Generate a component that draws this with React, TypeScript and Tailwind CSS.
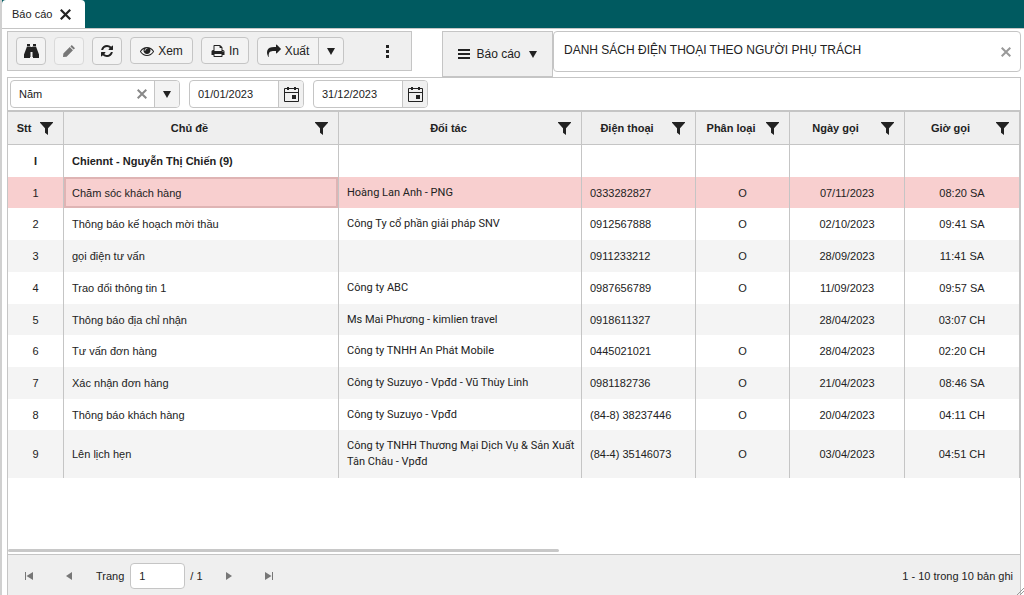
import type { ReactNode } from 'react';

type Row = { stt: string; subject: string; partner: string; phone: string; kind: string; date: string; time: string; height: string };

const rows: Row[] = [
  { stt: '1', subject: 'Chăm sóc khách hàng', partner: 'Hoàng Lan Anh - PNG', phone: '0333282827', kind: 'O', date: '07/11/2023', time: '08:20 SA', height: 'h-[31px]' },
  { stt: '2', subject: 'Thông báo kế hoạch mời thầu', partner: 'Công Ty cổ phần giải pháp SNV', phone: '0912567888', kind: 'O', date: '02/10/2023', time: '09:41 SA', height: 'h-8' },
  { stt: '3', subject: 'gọi điện tư vấn', partner: '', phone: '0911233212', kind: 'O', date: '28/09/2023', time: '11:41 SA', height: 'h-8' },
  { stt: '4', subject: 'Trao đổi thông tin 1', partner: 'Công ty ABC', phone: '0987656789', kind: 'O', date: '11/09/2023', time: '09:57 SA', height: 'h-8' },
  { stt: '5', subject: 'Thông báo địa chỉ nhận', partner: 'Ms Mai Phương - kimlien travel', phone: '0918611327', kind: '', date: '28/04/2023', time: '03:07 CH', height: 'h-[31px]' },
  { stt: '6', subject: 'Tư vấn đơn hàng', partner: 'Công ty TNHH An Phát Mobile', phone: '0445021021', kind: 'O', date: '28/04/2023', time: '02:20 CH', height: 'h-8' },
  { stt: '7', subject: 'Xác nhận đơn hàng', partner: 'Công ty Suzuyo - Vpđd - Vũ Thùy Linh', phone: '0981182736', kind: 'O', date: '21/04/2023', time: '08:46 SA', height: 'h-8' },
  { stt: '8', subject: 'Thông báo khách hàng', partner: 'Công ty Suzuyo - Vpđd', phone: '(84-8) 38237446', kind: 'O', date: '20/04/2023', time: '04:11 CH', height: 'h-[31px]' },
  { stt: '9', subject: 'Lên lịch hẹn', partner: 'Công ty TNHH Thương Mại Dịch Vụ & Sản Xuất Tân Châu - Vpđd', phone: '(84-4) 35146073', kind: 'O', date: '03/04/2023', time: '04:51 CH', height: 'h-12' },
];

const columns = [
  { title: 'Stt', width: 'w-14' },
  { title: 'Chủ đề', width: 'w-[275px]' },
  { title: 'Đối tác', width: '' },
  { title: 'Điện thoại', width: 'w-[114px]' },
  { title: 'Phân loại', width: 'w-[94px]' },
  { title: 'Ngày gọi', width: 'w-[115px]' },
  { title: 'Giờ gọi', width: 'w-[115px]' },
];

const buttonLook = 'flex items-center justify-center rounded border border-[#c5c5c5] bg-[#f3f3f3] text-[#222]';

function IconButton({ label, disabled, children }: { label: string; disabled?: boolean; children: ReactNode }) {
  return (
    <button type="button" aria-label={label} disabled={disabled} className={`${buttonLook} h-7 w-[30px] disabled:border-[#dadada] disabled:text-[#777]`}>
      {children}
    </button>
  );
}

function Glyph({ box, size, d }: { box: string; size: string; d: string }) {
  return (
    <svg viewBox={box} className={size} fill="currentColor" aria-hidden="true">
      <path d={d} />
    </svg>
  );
}

const refreshPath =
  'M1511 928q0 5-1 7-64 268-268 434.500t-478 166.500q-146 0-282.500-55t-243.500-157l-129 129q-19 19-45 19t-45-19-19-45v-448q0-26 19-45t45-19h448q26 0 45 19t19 45-19 45l-137 137q71 66 161 102t187 36q134 0 250-65t186-179q11-17 53-117 8-23 30-23h192q13 0 22.500 9.500t9.500 22.500zm25-800v448q0 26-19 45t-45 19h-448q-26 0-45-19t-19-45 19-45l138-138q-148-137-349-137-134 0-250 65t-186 179q-11 17-53 117-8 23-30 23h-199q-13 0-22.500-9.500t-9.500-22.500v-7q65-268 270-434.500t480-166.500q146 0 284 55.500t245 156.500l130-129q19-19 45-19t45 19 19 45z';
const eyePath =
  'M1664 960q-152-236-381-353 61 104 61 225 0 185-131.500 316.500t-316.500 131.500-316.500-131.500-131.500-316.500q0-121 61-225-229 117-381 353 133 205 333.500 326.500t434.500 121.500 434.500-121.500 333.500-326.500zm-720-384q0-20-14-34t-34-14q-125 0-214.500 89.500t-89.500 214.500q0 20 14 34t34 14 34-14 14-34q0-86 61-147t147-61q20 0 34-14t14-34zm848 384q0 34-20 69-140 230-376.500 368.500t-499.500 138.500-499.500-139-376.500-368q-20-35-20-69t20-69q140-229 376.500-368t499.500-139 499.500 139 376.500 368q20 35 20 69z';
const printPath =
  'M448 1536h896v-256h-896v256zm0-640h896v-384h-160q-40 0-68-28t-28-68v-160h-640v640zm1152 64q0-26-19-45t-45-19-45 19-19 45 19 45 45 19 45-19 19-45zm128 0v416q0 13-9.500 22.500t-22.500 9.500h-224v160q0 40-28 68t-68 28h-960q-40 0-68-28t-28-68v-160h-224q-13 0-22.500-9.500t-9.500-22.500v-416q0-79 56.500-135.500t135.500-56.500h64v-544q0-40 28-68t68-28h672q40 0 88 20t76 48l152 152q28 28 48 76t20 88v256h64q79 0 135.500 56.500t56.500 135.500z';
const sharePath =
  'M1792 640q0 26-19 45l-512 512q-19 19-45 19t-45-19-19-45v-256h-224q-98 0-175.500 6t-154 21.500-133 42.500-105.500 69.500-80 101-48.500 138.500-17.500 181q0 55 5 123 0 6 2.500 23.500t2.500 26.500q0 15-8.500 25t-23.500 10q-16 0-28-17-7-9-13-22t-13.500-30-10.500-24q-127-285-127-451 0-199 53-333 162-403 875-403h224v-256q0-26 19-45t45-19 45 19l512 512q19 19 19 45z';
const binocularsPath = 'M3 0h3v2H3zM9 0h3v2H9zM3 2.500h3.500V13H6v1H0v-3.500zM12 2.500H8.500V13H9v1h6v-3.500zM6.500 3h2v5h-2z';
const pencilPath = 'M9.500 0 13 3.500 11.500 5 8 1.500zM7.300 2.200l3.500 3.500L3.900 12.600 0 13l.4-3.900z';

function Cross({ size, weight }: { size: string; weight: number }) {
  return (
    <svg viewBox="0 0 10 10" className={size} fill="none" stroke="currentColor" strokeWidth={weight} aria-hidden="true">
      <path d="M.7.700l8.600 8.600M9.300.700L.7 9.300" />
    </svg>
  );
}

function Caret() {
  return <Glyph box="0 0 8 7" size="h-[7px] w-2" d="M0 0h8L4 7z" />;
}

function Calendar() {
  return (
    <svg viewBox="0 0 15 16" className="h-4 w-[15px]" fill="none" stroke="#222" aria-hidden="true">
      <path d="M.5 2.500h14v13H.5zM.5 6.500h14" />
      <path d="M4 1v3M11 1v3" strokeWidth="2" />
      <path d="M8 9h4v4H8z" fill="#222" stroke="none" />
    </svg>
  );
}

function DateField({ label, value }: { label: string; value: string }) {
  return (
    <div className="flex h-7 w-[115px] overflow-hidden rounded border border-[#c5c5c5]">
      <input aria-label={label} defaultValue={value} className="min-w-0 flex-1 px-2 outline-none" />
      <button type="button" aria-label={`Chọn ${label}`} className="flex w-[25px] items-center justify-center border-l border-[#c5c5c5] bg-[#f0f0f0]">
        <Calendar />
      </button>
    </div>
  );
}

function PageButton({ label, path }: { label: string; path: string }) {
  return (
    <button type="button" aria-label={label} className="flex size-7 items-center justify-center text-[#777]">
      <Glyph box="0 0 8 8" size="size-2" d={path} />
    </button>
  );
}

export default function App() {
  return (
    <div className="relative flex min-h-screen flex-col border-l-2 border-[#d0d0d0] bg-white font-['Liberation_Sans',Arial,sans-serif] text-[11px] leading-4 text-[#222]">
      <nav className="flex h-7 bg-[#005a60]">
        <div className="flex w-[83px] items-center gap-2 rounded-t bg-white pl-2.5">
          <a href="#bao-cao">Báo cáo</a>
          <button type="button" aria-label="Đóng thẻ"><Cross size="size-[11px]" weight={2} /></button>
        </div>
      </nav>
      <div className="border-t border-[#c5c5c5]" />

      <main className="mr-[3px] ml-[5px] flex flex-1 flex-col">
        <div className="flex h-12 items-start pt-0.5 text-xs">
          <div className="flex h-10 w-[405px] items-start gap-2 border border-[#c5c5c5] bg-[#efefef] pt-[5px] pl-2">
            <IconButton label="Tìm kiếm"><Glyph box="0 0 15 14" size="h-3.5 w-[15px]" d={binocularsPath} /></IconButton>
            <IconButton label="Sửa" disabled><Glyph box="0 0 13 13" size="size-3" d={pencilPath} /></IconButton>
            <IconButton label="Làm mới"><Glyph box="0 0 1536 1536" size="size-3" d={refreshPath} /></IconButton>
            <button type="button" className={`${buttonLook} h-[27px] w-[63px] gap-1`}><Glyph box="0 0 1792 1792" size="size-3.5" d={eyePath} />Xem</button>
            <button type="button" className={`${buttonLook} h-[27px] w-12 gap-1`}><Glyph box="0 0 1792 1792" size="size-3.5" d={printPath} />In</button>
            <div className={`${buttonLook} h-7 w-[87px]`}>
              <button type="button" className="flex h-full flex-1 items-center justify-center gap-1"><Glyph box="0 0 1792 1792" size="size-3.5" d={sharePath} />Xuất</button>
              <button type="button" aria-label="Tùy chọn xuất" className="flex h-full w-[25px] items-center justify-center border-l border-[#c5c5c5]"><Caret /></button>
            </div>
            <button type="button" aria-label="Thêm" className="ml-5 flex h-7 w-[30px] items-center justify-center">
              <Glyph box="0 0 3 13" size="h-[13px] w-[3px]" d="M0 0h3v3H0zM0 5h3v3H0zM0 10h3v3H0z" />
            </button>
          </div>
          <button type="button" className="ml-[30px] flex h-[46px] w-[111px] items-center justify-center gap-1.5 border border-[#c5c5c5] bg-[#f0f0f0]">
            <Glyph box="0 0 12 10" size="h-2.5 w-3" d="M0 0h12v2H0zM0 4h12v2H0zM0 8h12v2H0z" />Báo cáo<span className="ml-0.5"><Caret /></span>
          </button>
          <div className="flex h-[41px] flex-1 items-center rounded border border-[#c5c5c5] pr-[9px]">
            <input aria-label="Tên báo cáo" defaultValue="DANH SÁCH ĐIỆN THOẠI THEO NGƯỜI PHỤ TRÁCH" className="min-w-0 flex-1 px-2.5 pb-1 outline-none" />
            <button type="button" aria-label="Xóa báo cáo" className="text-[#999]"><Cross size="size-2.5" weight={2} /></button>
          </div>
        </div>

        <div className="flex h-[35px] items-start border border-b-2 border-[#c5c5c5] pt-0.5 pl-0.5">
          <div className="flex h-7 w-[170px] items-center overflow-hidden rounded border border-[#c5c5c5]">
            <input aria-label="Kỳ báo cáo" defaultValue="Năm" className="min-w-0 flex-1 px-2 outline-none" />
            <button type="button" aria-label="Xóa kỳ" className="mr-[7px] text-[#888]"><Cross size="size-2.5" weight={2} /></button>
            <button type="button" aria-label="Chọn kỳ" className="flex h-full w-[25px] items-center justify-center border-l border-[#c5c5c5] bg-[#f3f3f3]"><Caret /></button>
          </div>
          <div className="ml-[9px] flex gap-[9px]">
            <DateField label="từ ngày" value="01/01/2023" />
            <DateField label="đến ngày" value="31/12/2023" />
          </div>
        </div>

        <div className="flex-1 border-x border-[#c5c5c5]">
          <table className="w-full table-fixed border-separate border-spacing-0">
            <colgroup>
              {columns.map((c) => <col key={c.title} className={c.width} />)}
            </colgroup>
            <thead>
              <tr className="h-[33px] bg-[#efefef]">
                {columns.map((c) => (
                  <th key={c.title} className="border-r border-b border-[#c5c5c5] p-0">
                    <div className="flex items-center pr-2.5">
                      <span className="flex-1 text-center">{c.title}</span>
                      <button type="button" aria-label={`Lọc ${c.title}`}>
                        <Glyph box="0 0 13 13" size="size-[13px]" d="M0 0h13v.7L8 6.300V13l-3-2.300V6.300L0 .7z" />
                      </button>
                    </div>
                  </th>
                ))}
              </tr>
            </thead>
            <tbody className="[&_td]:border-r [&_td]:border-[#c5c5c5] [&_td]:px-2 [&_td]:py-0">
              <tr className="h-8 font-bold">
                <td className="text-center">I</td>
                <td>Chiennt - Nguyễn Thị Chiến (9)</td>
                <td /><td /><td /><td /><td />
              </tr>
              {rows.map((r, i) => (
                <tr key={r.stt} className={`${r.height} ${i === 0 ? 'bg-[#f8cfcf]' : i % 2 === 0 ? 'bg-[#f4f4f4]' : ''}`}>
                  <td className="text-center">{r.stt}</td>
                  <td className={i === 0 ? 'shadow-[inset_0_0_0_2px_#dfb4b4]' : ''}>{r.subject}</td>
                  <td className="pr-1! font-[Roboto,'Liberation_Sans',sans-serif]">{r.partner}</td>
                  <td>{r.phone}</td>
                  <td className="text-center">{r.kind}</td>
                  <td className="text-center">{r.date}</td>
                  <td className="text-center">{r.time}</td>
                </tr>
              ))}
            </tbody>
          </table>
        </div>
        <div className="border-x border-[#c5c5c5] pb-0.5">
          <div className="h-[3px] w-[551px] rounded-full bg-[#c8c8c8]" />
        </div>

        <footer className="flex h-[41px] items-center border border-b-0 border-[#c5c5c5] bg-[#efefef] pt-0.5 pr-[7px] pl-[7px]">
          <div className="flex gap-3">
            <PageButton label="Trang đầu" path="M0 0h1v8H0zM8 0v8L1.500 4z" />
            <PageButton label="Trang trước" path="M7 0v8L1 4z" />
          </div>
          <label className="ml-[13px] flex items-center gap-1.5">
            Trang
            <input defaultValue="1" className="h-[26px] w-[55px] rounded border border-[#c5c5c5] bg-white px-2 outline-none" />
          </label>
          <span className="ml-[5px]">/ 1</span>
          <div className="ml-3 flex gap-3">
            <PageButton label="Trang sau" path="M1 0v8l6-4z" />
            <PageButton label="Trang cuối" path="M7 0h1v8H7zM0 0v8l6.500-4z" />
          </div>
          <span className="ml-auto">1 - 10 trong 10 bản ghi</span>
        </footer>
      </main>
      <svg viewBox="0 0 8 8" className="absolute right-0 bottom-0 size-2" stroke="#999" fill="none" aria-hidden="true">
        <path d="M1 8l7-7M4 8l4-4" />
      </svg>
    </div>
  );
}
